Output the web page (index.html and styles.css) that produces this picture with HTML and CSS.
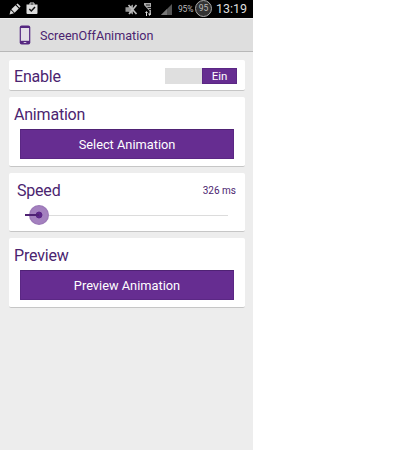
FILE: index.html
```html
<!DOCTYPE html>
<html lang="en">
<head>
    <meta charset="UTF-8">
    <meta name="viewport" content="width=device-width, initial-scale=1.0">
    <title>ScreenOffAnimation</title>
    <link rel="stylesheet" href="styles.css">
</head>
<body>
    <div class="screen">
        <div class="status-bar">
            <svg class="pencil" width="12" height="12" viewBox="0 0 12 12">
                <path fill="#ddd" d="M.5 11.500l1.200-4.500 3.300 3.300zM2.300 6.300L6.500 2.200l3.300 3.300L5.600 9.700zM7.300 1.500L8.600.4 11.600 3.400l-1.200 1.300z"/>
            </svg>
            <svg class="bag" width="12" height="12" viewBox="0 0 12 12">
                <path fill="none" stroke="#ddd" d="M4 3V1h4v2"/>
                <path fill="#ddd" d="M.5 2.500h11V11a1 1 0 0 1-1 1h-9a1 1 0 0 1-1-1z"/>
                <path fill="none" stroke="#111" stroke-width="1.500" d="M3.300 7l2 2L9 5"/>
            </svg>
            <svg class="mute" width="13" height="11" viewBox="0 0 13 11">
                <path fill="#999" d="M.5 3.200h3L8 .5v10L3.500 7.800h-3z"/>
                <path fill="none" stroke="#bbb" stroke-width="1.700" d="M3.500 1l8 9M4 10l7.500-9"/>
            </svg>
            <svg class="network" width="8" height="13" viewBox="0 0 8 13">
                <path fill="#aaa" d="M0 0h7v12H5.500V8L0 2z"/>
                <path fill="none" stroke="#222" d="M2 2h4M3.500 4.500H7M5 6.500h2"/>
                <path fill="#ddd" d="M1 10l1.500-2L4 10zM4 10.500h3L5.500 13zM2 10h1v3H2z"/>
            </svg>
            <svg class="signal" width="11" height="11" viewBox="0 0 11 11">
                <path fill="#555" d="M11 0v11H0z"/>
                <path fill="#777" d="M6 5v6H0z"/>
            </svg>
            <span class="percent">95%</span>
            <span class="battery">95</span>
            <span class="clock">13:19</span>
        </div>
        <div class="action-bar">
            <svg class="phone" width="12" height="20" viewBox="0 0 12 20">
                <rect x=".7" y=".5" width="10.600" height="19" rx="2" fill="#552780"/>
                <rect x="1.900" y="3" width="8.200" height="12.800" fill="#e3dfe6"/>
                <rect x="4.700" y="17" width="2.600" height="1" fill="#d4c6df"/>
            </svg>
            <h1>ScreenOffAnimation</h1>
        </div>
        <div class="content">
            <div class="card enable">
                <h2>Enable</h2>
                <div class="switch"><span>Ein</span></div>
            </div>
            <div class="card action">
                <h2>Animation</h2>
                <button>Select Animation</button>
            </div>
            <div class="card speed">
                <div class="speed-row">
                    <h2>Speed</h2>
                    <span class="value">326 ms</span>
                </div>
                <div class="slider">
                    <div class="fill"></div>
                    <div class="thumb"></div>
                    <div class="track"></div>
                </div>
            </div>
            <div class="card action">
                <h2>Preview</h2>
                <button>Preview Animation</button>
            </div>
        </div>
    </div>
</body>
</html>
```

FILE: styles.css
```css
* {
    box-sizing: border-box;
}
body {
    margin: 0;
    background: #fff;
    font-family: Roboto, sans-serif;
    color: #4b2470;
}
h1, h2 {
    margin: 0;
    font-weight: 400;
}
.screen {
    width: 253px;
    height: 450px;
    background: #ededed;
}
.status-bar {
    display: flex;
    align-items: center;
    height: 18px;
    padding-left: 9px;
    background: #000;
    color: #ddd;
}
.status-bar svg {
    flex: none;
}
.bag {
    margin-left: 5px;
    margin-top: -2px;
}
.mute {
    margin-left: 87px;
}
.network {
    margin-left: 6px;
}
.signal {
    margin-left: 9px;
    margin-top: 1px;
}
.percent {
    width: 17px;
    margin-left: 6px;
    font-size: 8.5px;
    letter-spacing: -0.2px;
    color: #bbb;
}
.battery {
    flex: none;
    width: 17px;
    height: 17px;
    margin-top: -2px;
    border: 1.5px solid #aaa;
    border-radius: 50%;
    background: #333;
    font-size: 8.5px;
    line-height: 14px;
    text-align: center;
    color: #bbb;
}
.clock {
    margin-left: 4px;
    font-size: 12.5px;
    line-height: 18px;
}
.action-bar {
    display: flex;
    align-items: center;
    height: 34px;
    padding-left: 19px;
    background: #dedede;
    border-top: 1px solid #ededed;
    border-bottom: 1px solid #b8b8b8;
}
.action-bar h1 {
    margin-left: 9px;
    font-size: 12.6px;
}
.content {
    display: flex;
    flex-direction: column;
    gap: 6px;
    padding: 8px 8px 0 9px;
}
.card {
    background: #fff;
    border-bottom: 1px solid #c6c6c6;
    border-radius: 2px;
}
.card h2 {
    font-size: 16px;
    line-height: 20px;
    letter-spacing: -0.2px;
}
.enable {
    display: flex;
    align-items: center;
    justify-content: space-between;
    height: 31px;
    padding: 2px 8px 0 5px;
}
.enable h2 {
    margin-top: 2px;
}
.switch {
    display: flex;
    justify-content: flex-end;
    width: 72px;
    height: 16px;
    background: #dfdfdf;
}
.switch span {
    width: 35px;
    background: #662d91;
    border: 1px solid #5b2784;
    color: #fff;
    font-size: 11.5px;
    line-height: 15px;
    text-align: center;
}
.action {
    height: 70px;
    padding: 8px 11px 0;
}
.action h2 {
    margin-left: -6px;
}
.action button {
    display: block;
    width: 214px;
    height: 30px;
    margin-top: 4px;
    padding: 0;
    background: #662d91;
    border: 1px solid #5b2784;
    border-top-color: #4f2274;
    color: #fff;
    font-family: inherit;
    font-size: 12.8px;
}
.speed {
    height: 59px;
    padding: 8px 9px 0 8px;
}
.speed-row {
    display: flex;
    align-items: center;
    justify-content: space-between;
}
.value {
    margin-top: -2px;
    font-size: 10px;
}
.slider {
    display: flex;
    align-items: center;
    height: 20px;
    margin-top: 4px;
    padding: 0 8px;
}
.fill {
    width: 6px;
    height: 2px;
    background: #4f2274;
}
.thumb {
    width: 20px;
    height: 20px;
    margin-left: -2px;
    border-radius: 50%;
    background: linear-gradient(#4f2274, #4f2274) 0 50% / 10px 2px no-repeat, radial-gradient(#5b2588 3px, #a481bf 3.8px, #a481bf 8px, #9672b3 10px);
}
.track {
    flex: 1;
    height: 1px;
    background: #dcdcdc;
}
```
